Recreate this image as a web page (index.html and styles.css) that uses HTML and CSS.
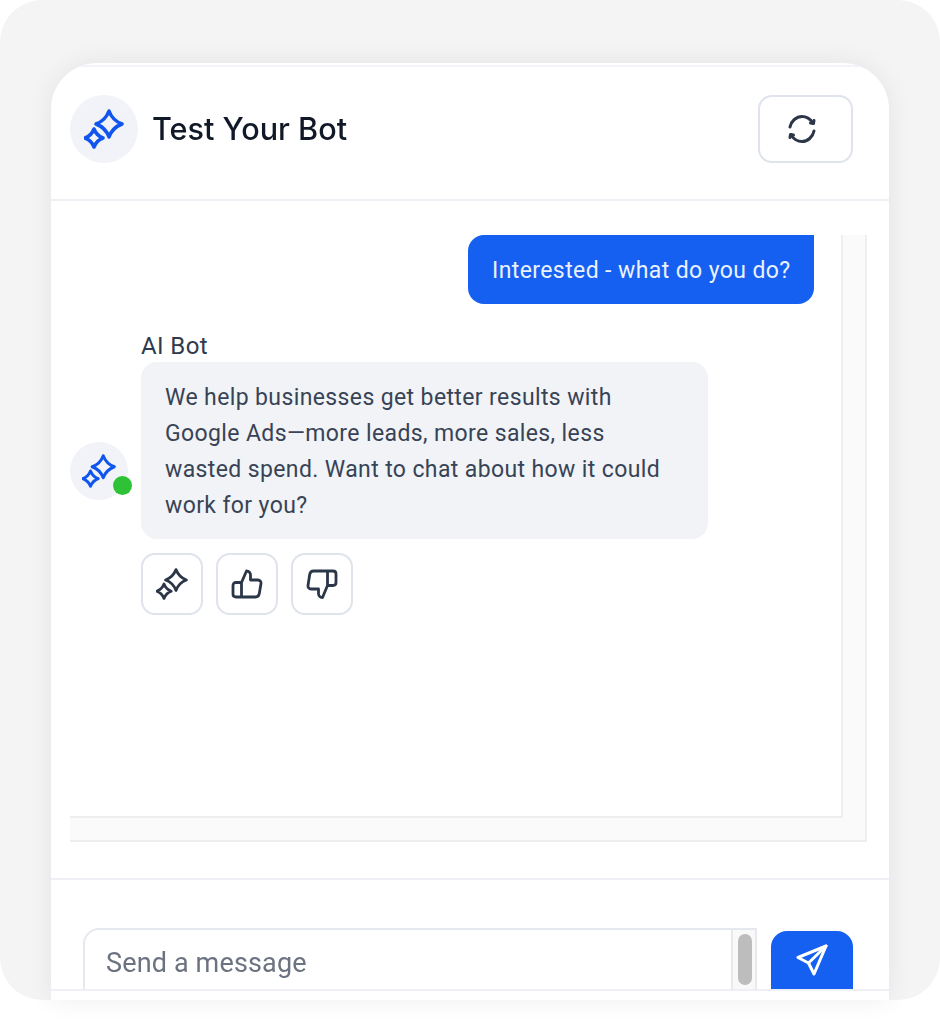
FILE: index.html
```html
<!DOCTYPE html>
<html lang="en">
<head>
<meta charset="utf-8">
<title>Test Your Bot</title>
<link rel="stylesheet" href="styles.css">
</head>
<body>
<svg class="defs" width="0" height="0" aria-hidden="true">
  <symbol id="sparkle" viewBox="0 0 40 40">
    <path d="M25 2Q28.500 11.500 38 15Q28.500 18.500 25 28Q21.500 18.500 12 15Q21.500 11.500 25 2Z" fill="none" stroke="currentColor" stroke-width="3.500" stroke-linejoin="round"/>
    <path d="M10 20Q12.500 26.500 19 29Q12.500 31.500 10 38Q7.500 31.500 1 29Q7.500 26.500 10 20Z" fill="none" stroke="currentColor" stroke-width="3.500" stroke-linejoin="round"/>
  </symbol>
</svg>
<main class="panel">
  <section class="card">
    <header class="head">
      <span class="avatar avatar-lg"><svg class="spark spark-lg"><use href="#sparkle"/></svg></span>
      <h1 class="title">Test Your Bot</h1>
      <button class="refresh" type="button" aria-label="Restart">
        <svg viewBox="0 0 32 32" width="32" height="32" fill="none" stroke="currentColor" stroke-width="3" stroke-linecap="round" stroke-linejoin="round">
          <path d="M4 14C5.200 8 10.300 3.500 16 3.500C20.500 3.500 24.300 6 27 10"/>
          <path d="M28 18C26.800 24 21.700 28.500 16 28.500C11.500 28.500 7.700 26 5 22"/>
          <path d="M28 7.500L27.500 10.500L24.500 10"/>
          <path d="M4 24.500L4.500 21.500L7.500 22"/>
        </svg>
      </button>
    </header>
    <div class="chat">
      <div class="frame-outer">
        <div class="frame-inner">
          <div class="user-row"><p class="user-bubble">Interested - what do you do?</p></div>
          <div class="bot-row">
            <span class="avatar avatar-sm"><svg class="spark spark-sm"><use href="#sparkle"/></svg><i class="dot"></i></span>
            <div class="bot-col">
              <div class="bot-name">AI Bot</div>
              <p class="bot-bubble">We help businesses get better results with<br>Google Ads—more leads, more sales, less<br>wasted spend. Want to chat about how it could<br>work for you?</p>
              <div class="actions">
                <button class="act" type="button" aria-label="Improve"><svg class="spark spark-act"><use href="#sparkle"/></svg></button>
                <button class="act" type="button" aria-label="Like">
                  <svg viewBox="0 0 32 32" width="32" height="32" fill="none" stroke="currentColor" stroke-width="2.800" stroke-linecap="round" stroke-linejoin="round"><path d="M10.500 14.500L15.500 3C18 3 19.500 5 19.500 7V12H27C29 12 30.300 13.700 30 15.500L28.300 25.500C28 27.300 26.500 29 24.500 29H5C3.300 29 2 27.700 2 26V17.500C2 15.800 3.300 14.500 5 14.500H10.500V29"/></svg>
                </button>
                <button class="act" type="button" aria-label="Dislike">
                  <svg viewBox="0 0 32 32" width="32" height="32" fill="none" stroke="currentColor" stroke-width="2.800" stroke-linecap="round" stroke-linejoin="round"><path d="M21.500 17.500L16.500 29.500C14 29.500 12.500 27.500 12.500 25.500V21H5C3 21 1.700 19.300 2 17.500L3.700 6.500C4 4.700 5.500 3 7.500 3H27C28.700 3 30 4.300 30 6V14.500C30 16.200 28.700 17.500 27 17.500H21.500V3"/></svg>
                </button>
              </div>
            </div>
          </div>
        </div>
      </div>
    </div>
    <div class="composer">
      <div class="input">
        <span class="placeholder">Send a message</span>
        <span class="track"><i class="thumb"></i></span>
      </div>
      <button class="send" type="button" aria-label="Send">
        <svg viewBox="0 0 32 32" width="32" height="32" fill="none" stroke="currentColor" stroke-width="3" stroke-linecap="round" stroke-linejoin="round"><path d="M30 2L2 13.500L12.500 19L18 30Z"/><path d="M30 2L12.500 19"/></svg>
      </button>
    </div>
    <div class="foot"></div>
  </section>
</main>
</body>
</html>
```
FILE: styles.css
```css
* { box-sizing: border-box; }
html, body { margin: 0; background: #fff; }
body { width: 940px; height: 1024px; overflow: hidden; font-family: Roboto, "Liberation Sans", sans-serif; }
.defs { position: absolute; }
p, h1 { margin: 0; }
button { padding: 0; background: #fff; font: inherit; cursor: pointer; }

.panel { width: 940px; height: 1000px; padding: 63px 51px 0; background: #f4f4f5; border-radius: 42px; }
.card { width: 838px; height: 937px; display: flex; flex-direction: column; padding-top: 2px; background: #fff; border-radius: 46px 46px 0 0; box-shadow: 0 0 26px rgba(0, 0, 0, .07); overflow: hidden; filter: blur(.4px); }

.head { height: 136px; flex: none; display: flex; align-items: center; padding: 0 36px 8px 19px; border-top: 2px solid #f3f3fa; border-bottom: 2px solid #eef0f5; }
.title { margin-left: 14px; flex: 1; font: 500 30.600px/1.2 Inter, sans-serif; color: #111827; }
.refresh { width: 95px; height: 68px; display: flex; align-items: center; justify-content: center; border: 2px solid #dfe3ec; border-radius: 14px; color: #2b3648; padding-right: 8px; }

.avatar { position: relative; flex: none; display: flex; align-items: center; justify-content: center; border-radius: 50%; background: #f1f3f8; color: #0f55ee; }
.avatar-lg { width: 68px; height: 68px; }
.avatar-sm { width: 58px; height: 58px; margin-bottom: 6px; }
.spark { display: block; }
.spark-lg { width: 40px; height: 40px; }
.spark-sm { width: 34px; height: 34px; }
.spark-act { width: 32px; height: 32px; }
.dot { position: absolute; right: -4px; bottom: 5px; width: 19px; height: 19px; border-radius: 50%; background: #2ec236; }

.chat { flex: 1; min-height: 0; padding: 34px 0 0 19px; }
.frame-outer { width: 797px; height: 607px; padding: 0 22px 22px 0; background: #fafafa; border-right: 2px solid #eeeeef; border-bottom: 2px solid #eeeeef; }
.frame-inner { height: 583px; background: #fff; border-right: 2px solid #eeeeef; border-bottom: 2px solid #eeeeef; padding-right: 27px; }

.user-row { display: flex; justify-content: flex-end; }
.user-bubble { height: 69px; padding: 1px 23px 0 24px; display: flex; align-items: center; width: 346px; background: #1560f0; color: #eaf1ff; border-radius: 16px 0 16px 16px; font-size: 23px; letter-spacing: .4px; white-space: nowrap; }

.bot-row { display: flex; align-items: center; margin-top: 28px; }
.bot-col { margin-left: 13px; }
.bot-name { font-size: 24px; line-height: 29px; margin-bottom: 1px; letter-spacing: .4px; color: #2f3a4c; }
.bot-bubble { width: 567px; height: 177px; padding: 18px 24px; background: #f1f3f7; border-radius: 16px; font-size: 23px; letter-spacing: .38px; line-height: 36px; color: #384356; white-space: nowrap; }
.actions { display: flex; gap: 13px; margin-top: 14px; }
.act { width: 62px; height: 62px; display: flex; align-items: center; justify-content: center; border: 2px solid #dfe3ec; border-radius: 14px; color: #2b3648; }

.composer { height: 111px; flex: none; display: flex; align-items: flex-start; padding: 48px 36px 0 32px; border-top: 2px solid #eef0f5; overflow: hidden; }
.input { width: 675px; height: 90px; display: flex; padding-left: 21px; border: 2px solid #e6e8ef; border-right: 0; border-radius: 16px 0 0 16px; }
.placeholder { flex: 1; padding-top: 15px; font-size: 27px; letter-spacing: .15px; line-height: 36px; color: #6b7280; }
.track { width: 26px; padding: 4px 5px; background: #f9f9f9; border-left: 2px solid #e9e9ec; border-right: 2px solid #e9e9ec; }
.thumb { display: block; width: 14px; height: 51px; border-radius: 7px; background: #bdbdbd; }
.send { width: 82px; height: 80px; margin: 3px 0 0 14px; display: flex; align-items: center; justify-content: center; padding-bottom: 22px; border: 0; border-radius: 16px; background: #1560f0; color: #fff; }

.foot { height: 11px; flex: none; border-top: 2px solid #eef0f5; }
```
